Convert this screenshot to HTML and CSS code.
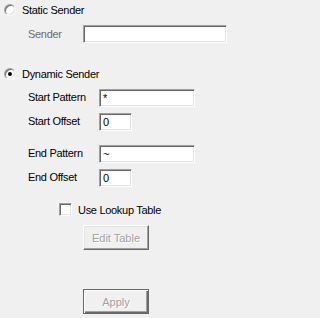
FILE: index.html
```html
<!DOCTYPE html>
<html>
<head>
<meta charset="utf-8">
<link rel="stylesheet" href="styles.css">
</head>
<body>
<div class="panel">
  <div class="opt">
    <span class="radio"></span>
    <span class="txt">Static Sender</span>
  </div>
  <div class="field f-sender">
    <span class="lbl lbl-sender disabled">Sender</span>
    <span class="edit w-sender"></span>
  </div>

  <div class="opt opt-dyn">
    <span class="radio on"><span class="dot"></span></span>
    <span class="txt">Dynamic Sender</span>
  </div>
  <div class="field f-sp">
    <span class="lbl">Start Pattern</span>
    <span class="edit w-long">*</span>
  </div>
  <div class="field f-so">
    <span class="lbl">Start Offset</span>
    <span class="edit w-short">0</span>
  </div>
  <div class="field f-ep">
    <span class="lbl">End Pattern</span>
    <span class="edit w-long">~</span>
  </div>
  <div class="field f-eo">
    <span class="lbl">End Offset</span>
    <span class="edit w-short">0</span>
  </div>

  <div class="check-row">
    <span class="check"></span>
    <span class="txt">Use Lookup Table</span>
  </div>
  <div class="btn-row r-edit">
    <span class="btn">Edit Table</span>
  </div>
  <div class="btn-row r-apply">
    <span class="btn btn-default">Apply</span>
  </div>
</div>
</body>
</html>
```
FILE: styles.css
```css
html, body {
  margin: 0;
  padding: 0;
  background: #f0f0f0;
}
body {
  width: 232px;
  height: 318px;
  overflow: hidden;
  font-family: "Liberation Sans", Arial, sans-serif;
  font-size: 11px;
  letter-spacing: -0.3px;
  color: #000;
}
.panel {
  display: flex;
  flex-direction: column;
  padding: 4px 5px 0 4px;
}
.opt {
  display: flex;
  align-items: center;
  gap: 6px;
  height: 12px;
}
.opt-dyn { margin-top: 25px; }
.txt { line-height: 12px; }
.radio {
  box-sizing: border-box;
  width: 12px;
  height: 12px;
  border-radius: 50%;
  background: #fff;
  border: 1px solid;
  border-color: #a0a0a0 #f8f8f8 #f8f8f8 #a0a0a0;
  box-shadow: inset 1px 1px 0 #696969, inset -1px -1px 0 #e3e3e3;
  display: flex;
  align-items: center;
  justify-content: center;
}
.dot {
  width: 4px;
  height: 4px;
  border-radius: 50%;
  background: #000;
}
.field {
  display: flex;
  align-items: center;
  height: 18px;
  padding-left: 24px;
}
.f-sender { margin-top: 9px; }
.f-sp { margin-top: 9px; }
.f-so { margin-top: 6px; }
.f-ep { margin-top: 14px; }
.f-eo { margin-top: 6px; }
.lbl {
  width: 71px;
  line-height: 12px;
  margin-top: -3px;
}
.lbl-sender { width: 55px; margin-top: 0; }
.disabled { color: #6d6d6d; }
.edit {
  box-sizing: border-box;
  height: 18px;
  background: #fff;
  border: 1px solid;
  border-color: #a0a0a0 #ffffff #ffffff #a0a0a0;
  box-shadow: inset 1px 1px 0 #696969, inset -1px -1px 0 #e3e3e3;
  padding: 2px 3px 0 3px;
  line-height: 13px;
}
.w-sender { width: 144px; }
.w-long { width: 96px; }
.w-short { width: 33px; }
.check-row {
  display: flex;
  align-items: center;
  gap: 6px;
  height: 13px;
  margin-top: 16px;
  padding-left: 55px;
}
.check {
  box-sizing: border-box;
  width: 13px;
  height: 13px;
  background: #fff;
  border: 1px solid;
  border-color: #a0a0a0 #ffffff #ffffff #a0a0a0;
  box-shadow: inset 1px 1px 0 #696969, inset -1px -1px 0 #e3e3e3;
}
.btn-row {
  display: flex;
  padding-left: 79px;
}
.r-edit { margin-top: 9px; }
.r-apply { margin-top: 39px; }
.btn {
  box-sizing: border-box;
  width: 66px;
  height: 25px;
  display: flex;
  align-items: center;
  justify-content: center;
  color: #a0a0a0;
  text-shadow: 1px 1px 0 #ffffff;
  letter-spacing: 0;
  background: #f0f0f0;
  border: 1px solid;
  border-color: #ffffff #696969 #696969 #ffffff;
  box-shadow: inset -1px -1px 0 #a0a0a0, inset 1px 1px 0 #e3e3e3;
}
.btn-default {
  border: 1px solid #696969;
  box-shadow: inset 1px 1px 0 #ffffff, inset -1px -1px 0 #696969, inset -2px -2px 0 #a0a0a0;
}
```
